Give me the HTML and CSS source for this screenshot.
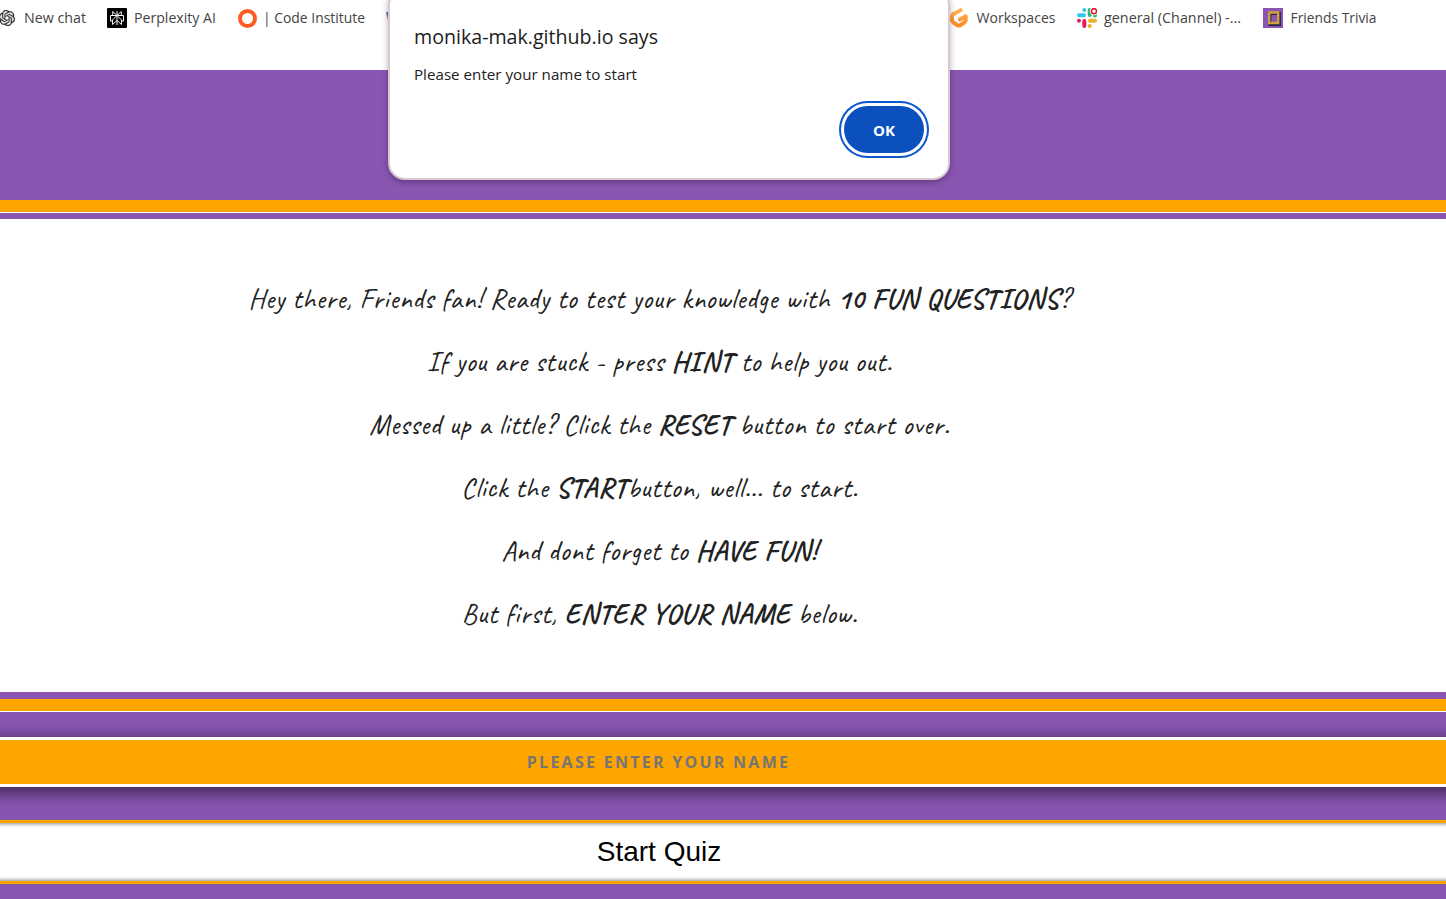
FILE: index.html
```html
<!DOCTYPE html>
<html lang="en">
<head>
<meta charset="utf-8">
<title>Friends Trivia</title>
<link rel="stylesheet" href="styles.css">
</head>
<body>
<nav class="bookmarks">
  <div class="bookmark chat">
    <svg class="icon" viewBox="0 0 24 24"><path fill="#333" stroke="#333" stroke-width=".4" d="M22.282 9.821a5.985 5.985 0 0 0-.516-4.910 6.046 6.046 0 0 0-6.510-2.900A6.065 6.065 0 0 0 4.981 4.182a5.985 5.985 0 0 0-3.998 2.900 6.046 6.046 0 0 0 .743 7.097 5.980 5.980 0 0 0 .510 4.911 6.051 6.051 0 0 0 6.515 2.900A5.985 5.985 0 0 0 13.260 24a6.056 6.056 0 0 0 5.772-4.206 5.990 5.990 0 0 0 3.998-2.900 6.056 6.056 0 0 0-.748-7.073zM13.260 22.430a4.476 4.476 0 0 1-2.876-1.041l.141-.080 4.779-2.758a.795.795 0 0 0 .393-.681v-6.737l2.020 1.169a.071.071 0 0 1 .038.052v5.583a4.504 4.504 0 0 1-4.495 4.493zM3.600 18.304a4.471 4.471 0 0 1-.535-3.014l.142.085 4.783 2.759a.771.771 0 0 0 .780 0l5.843-3.369v2.332a.080.080 0 0 1-.033.062L9.740 19.950a4.500 4.500 0 0 1-6.140-1.646zM2.341 7.896a4.485 4.485 0 0 1 2.366-1.973v5.677a.766.766 0 0 0 .388.677l5.815 3.354-2.021 1.169a.076.076 0 0 1-.071 0l-4.830-2.787A4.504 4.504 0 0 1 2.341 7.872zm16.597 3.856l-5.834-3.388 2.015-1.164a.076.076 0 0 1 .071 0l4.830 2.791a4.494 4.494 0 0 1-.677 8.105v-5.678a.790.790 0 0 0-.405-.666zm2.010-3.024l-.142-.085-4.774-2.782a.776.776 0 0 0-.785 0L9.409 9.230V6.897a.066.066 0 0 1 .028-.062l4.830-2.787a4.499 4.499 0 0 1 6.681 4.660zM8.307 12.863l-2.020-1.164a.080.080 0 0 1-.038-.057V6.074a4.499 4.499 0 0 1 7.376-3.453l-.142.080-4.778 2.758a.795.795 0 0 0-.393.682zm1.097-2.365l2.602-1.500 2.607 1.500v2.999l-2.597 1.500-2.607-1.500z"/></svg>
    <svg class="label" width="62" height="24"><text x="0" y="17" textLength="62" lengthAdjust="spacingAndGlyphs">New chat</text></svg>
  </div>
  <div class="bookmark perplexity">
    <svg class="icon" viewBox="0 0 20 20"><rect width="20" height="20" rx="1" fill="#000"/><path d="M10 3v14M5.700 3.500v4H14.300v-4L10 7.500zM3.500 7.500h13v5.500h-2v3.500L10 12.500l-4.500 4V13h-2zM10 7.500L5.500 12v2M10 7.500l4.500 4.500v2" fill="none" stroke="#fff" stroke-width=".95"/></svg>
    <svg class="label" width="82" height="24"><text x="0" y="17" textLength="82" lengthAdjust="spacingAndGlyphs">Perplexity AI</text></svg>
  </div>
  <div class="bookmark institute">
    <svg class="icon" viewBox="0 0 20 20"><circle cx="9.500" cy="10.500" r="7.500" fill="none" stroke="#ff5a1f" stroke-width="4"/></svg>
    <svg class="label" width="102" height="24"><text x="-1" y="17" textLength="102" lengthAdjust="spacingAndGlyphs">| Code Institute</text></svg>
  </div>
  <div class="bookmark word">W</div>
  <div class="bookmark workspaces">
    <svg class="icon" viewBox="0 0 20 20"><defs><linearGradient id="amber" x1="0" y1="0" x2="0" y2="1"><stop offset="0" stop-color="#ffb45b"/><stop offset="1" stop-color="#ff8a1f"/></linearGradient></defs><path d="M11.500 2.200L4.500 6Q3 6.900 3 8.500v3.600q0 1.600 1.400 2.400l3.900 2.700q1.500.8 3 0l4-2.700q1.400-.8 1.400-2.400V8.200L10.800 11.500" fill="none" stroke="url(#amber)" stroke-width="4" stroke-linejoin="round" stroke-linecap="round"/></svg>
    <svg class="label" width="79" height="24"><text x="0.500" y="17" textLength="79" lengthAdjust="spacingAndGlyphs">Workspaces</text></svg>
  </div>
  <div class="bookmark slack">
    <svg class="icon" viewBox="0 0 20 20"><g fill="none" stroke-width="4" stroke-linecap="round"><path d="M2 7.300h5M7.300 2v.1" stroke="#36c5f0"/><path d="M12.700 2v5M18 7.500v.1" stroke="#2eb67d"/><path d="M13 12.700h5M12.700 18v.1" stroke="#ecb22e"/><path d="M7.300 13v5M2 12.700v.1" stroke="#e01e5a"/></g><circle cx="17" cy="3" r="4.200" fill="#fff"/><circle cx="17" cy="3.200" r="2.500" fill="#fff" stroke="#e8112d" stroke-width="1.500"/></svg>
    <svg class="label" width="138" height="24"><text x="0" y="17" textLength="137" lengthAdjust="spacingAndGlyphs">general (Channel) -...</text></svg>
  </div>
  <div class="bookmark trivia">
    <svg class="icon" viewBox="0 0 20 20"><rect width="20" height="20" fill="#8855b3"/><path d="M7 5.500h9.500v11H7z" fill="none" stroke="#29204c" stroke-width="2.800"/><path d="M6.200 4.500h9v10.500h-9z" fill="none" stroke="#dba83c" stroke-width="2.400"/><path d="M6.200 4.500h9v10.500h-9z" fill="none" stroke="#8d6427" stroke-width=".7" stroke-dasharray="1 2.200"/></svg>
    <svg class="label" width="86" height="24"><text x="0.500" y="17" textLength="86" lengthAdjust="spacingAndGlyphs">Friends Trivia</text></svg>
  </div>
</nav>
<header class="banner"></header>
<div class="stripe stripe-top"></div>
<main class="intro">
  <p class="line">Hey there, Friends fan! Ready to test your knowledge with <strong>10 FUN QUESTIONS</strong>?</p>
  <p class="line">If you are stuck - press <strong>HINT</strong> to help you out.</p>
  <p class="line">Messed up a little? Click the <strong>RESET</strong> button to start over.</p>
  <p class="line">Click the <strong>START</strong>button, well... to start.</p>
  <p class="line">And dont forget to <strong>HAVE FUN!</strong></p>
  <p class="line">But first, <strong>ENTER YOUR NAME</strong> below.</p>
</main>
<footer class="entry">
  <div class="stripe stripe-bottom"></div>
  <input class="name" type="text" placeholder="PLEASE ENTER YOUR NAME">
  <button class="start">Start Quiz</button>
</footer>
<section class="dialog">
  <svg class="dialog-text" width="280" height="100"><text class="dialog-title" x="0" y="44" textLength="244" lengthAdjust="spacingAndGlyphs">monika-mak.github.io says</text><text class="dialog-message" x="0" y="80" textLength="223" lengthAdjust="spacingAndGlyphs">Please enter your name to start</text></svg>
  <button class="ok">OK</button>
</section>
</body>
</html>
```
FILE: styles.css
```css
* { box-sizing: border-box; }
body {
  margin: 0;
  width: 1446px;
  height: 899px;
  overflow: hidden;
  position: relative;
  background: #fff;
  font-family: "Open Sans", "Noto Sans", sans-serif;
}
.bookmarks { display: flex; height: 70px; padding-top: 6px; }
.bookmark { display: flex; align-items: center; height: 24px; flex: none; }
.icon { width: 20px; height: 20px; flex: none; }
.label { display: block; flex: none; margin-left: 7px; font-size: 15px; fill: #444; overflow: visible; }
.chat { width: 108px; margin-left: -1px; }
.chat .icon { width: 16px; height: 16px; }
.chat .label { margin-left: 9px; }
.perplexity { width: 131px; }
.institute { width: 148px; }
.institute .label { margin-left: 6px; }
.word { width: 563px; font-size: 16px; font-weight: 700; color: #3979b5; }
.workspaces { width: 128px; }
.slack { width: 186px; }
.banner { height: 130px; background: #8855b1; }
.stripe { height: 19px; background: linear-gradient(#ffa500 0 12px, #fff 12px 13px, #8855b1 13px); }
.intro { height: 473px; padding: 62px 127px 0 0; background: #fff; }
.line {
  margin: 0;
  height: 63px;
  white-space: nowrap;
  text-align: center;
  font: 400 28px/35px Caveat, cursive;
  letter-spacing: .62px;
  color: #222;
}
.line strong { font-weight: 700; letter-spacing: .88px; }
.entry { height: 207px; padding-top: 7px; background: #8855b1; overflow: hidden; }
.stripe-bottom { height: 13px; }
.name {
  display: block;
  width: 1486px;
  height: 50px;
  margin: 25px 0 0 -20px;
  padding: 0 149px 0 20px;
  border: 3px solid #fff;
  background: #ffa500;
  box-shadow: 0 4px 18px rgba(0, 0, 0, .65);
  font: 700 16px "Open Sans", sans-serif;
  letter-spacing: 2.27px;
  text-align: center;
}
.name::placeholder { color: #757575; opacity: 1; }
.start {
  display: block;
  width: 1486px;
  height: 64px;
  margin: 33px 0 0 -20px;
  padding: 0 148px 0 20px;
  border: solid #ffa500;
  border-width: 3px 0;
  background: #fff;
  box-shadow: inset 0 0 5px rgba(0, 0, 0, .65);
  font: 28px "Liberation Sans", sans-serif;
  color: #000;
}
.dialog {
  position: absolute;
  left: 388px;
  top: -12px;
  width: 562px;
  height: 192px;
  border: 2px solid #dbc7d4;
  border-radius: 17px;
  background: #fff;
  box-shadow: 0 2px 6px rgba(0, 0, 0, .3);
  display: flex;
  justify-content: space-between;
  padding: 10px 24px 0 24px;
}
.dialog-text { overflow: visible; }
.dialog-title { font-size: 19.5px; font-weight: 500; fill: #1c1c1c; }
.dialog-message { font-size: 15px; fill: #222; }
.ok {
  width: 80px;
  height: 47px;
  margin-top: 106px;
  padding: 0;
  border: 0;
  border-radius: 24px;
  background: #0b50bd;
  box-shadow: 0 0 0 3px #fff, 0 0 0 5px #0b57d0;
  color: #fff;
  font: 700 15px "Open Sans", sans-serif;
}
```
